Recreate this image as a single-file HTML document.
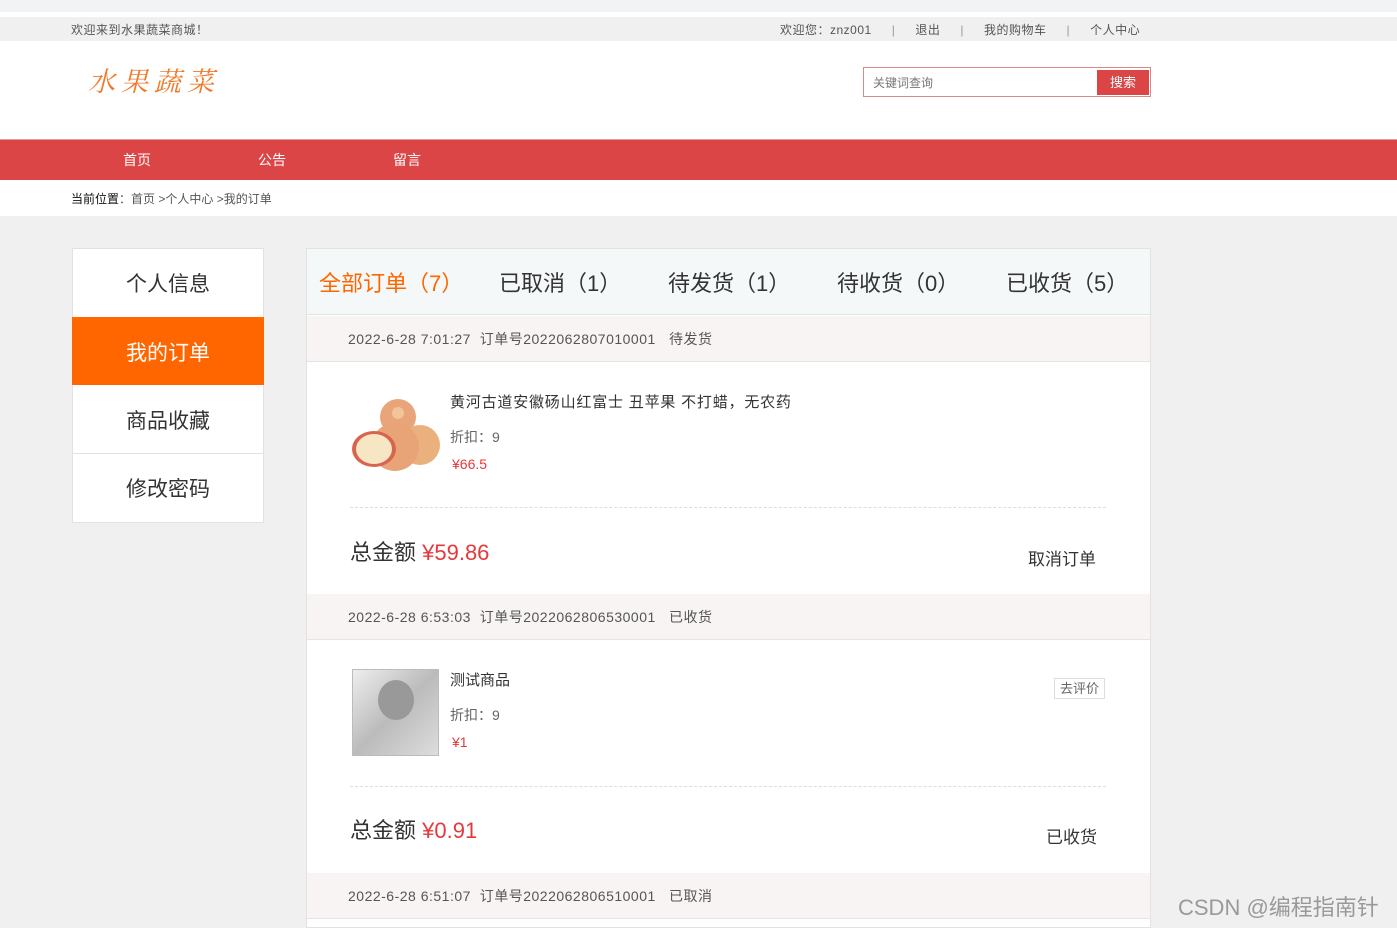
<!DOCTYPE html>
<html><head><meta charset="utf-8"><style>
*{margin:0;padding:0;box-sizing:border-box}
body{width:1397px;height:922px;overflow:hidden;background:#f0f0f0;font-family:"Liberation Sans","Noto Sans CJK SC",sans-serif;color:#333;position:relative}
.a{position:absolute}
.t{white-space:nowrap}
</style></head><body>
<div class="a" style="left:0;top:0;width:1397px;height:12px;background:#f1f3f4"></div>
<div class="a" style="left:0;top:12px;width:1397px;height:5px;background:#fff"></div>
<div class="a" style="left:0;top:17px;width:1397px;height:24px;background:#f0f0f0"></div>
<div class="a t" style="left:71px;top:21px;font-size:12px;color:#555;letter-spacing:0.5px">欢迎来到水果蔬菜商城！</div>
<div class="a t" style="left:780px;top:21px;font-size:12px;color:#555;letter-spacing:0.5px">欢迎您：znz001<span style="margin:0 20px;color:#999">|</span>退出<span style="margin:0 20px;color:#999">|</span>我的购物车<span style="margin:0 20px;color:#999">|</span>个人中心</div>
<div class="a" style="left:0;top:41px;width:1397px;height:99px;background:#fff"></div>
<div class="a t" style="left:88px;top:60px;font-size:27px;color:#f07a2a;letter-spacing:6px;font-family:'Noto Serif CJK SC',serif;font-style:italic">水果蔬菜</div>
<div class="a" style="left:863px;top:67px;width:288px;height:30px;border:1px solid #d9898a;background:#fff"></div>
<div class="a t" style="left:873px;top:74px;font-size:12px;color:#777">关键词查询</div>
<div class="a" style="left:1097px;top:70px;width:52px;height:25px;background:#db4545;color:#fff;font-size:13px;text-align:center;line-height:25px">搜索</div>
<div class="a" style="left:0;top:139px;width:1397px;height:41px;background:#db4545;border-top:1px solid #e59a9a"></div>
<div class="a t" style="left:123px;top:150px;font-size:14px;color:#fff">首页</div>
<div class="a t" style="left:258px;top:150px;font-size:14px;color:#fff">公告</div>
<div class="a t" style="left:393px;top:150px;font-size:14px;color:#fff">留言</div>
<div class="a" style="left:0;top:180px;width:1397px;height:36px;background:#fff"></div>
<div class="a t" style="left:71px;top:190px;font-size:12px;color:#555"><span style="color:#111">当前位置</span>：首页 &gt;个人中心 &gt;我的订单</div>

<div class="a" style="left:72px;top:248px;width:192px;height:275px;background:#fff;border:1px solid #e2e2e2"></div>
<div class="a t" style="left:72px;top:268px;width:192px;text-align:center;font-size:21px;color:#333">个人信息</div>
<div class="a" style="left:72px;top:317px;width:192px;height:68px;background:#ff6600"></div>
<div class="a t" style="left:72px;top:337px;width:192px;text-align:center;font-size:21px;color:#fff">我的订单</div>
<div class="a" style="left:72px;top:453px;width:192px;height:1px;background:#e2e2e2"></div>
<div class="a t" style="left:72px;top:405px;width:192px;text-align:center;font-size:21px;color:#333">商品收藏</div>
<div class="a t" style="left:72px;top:473px;width:192px;text-align:center;font-size:21px;color:#333">修改密码</div>

<div class="a" style="left:306px;top:248px;width:845px;height:680px;background:#fff;border:1px solid #e2e2e2"></div>
<div class="a" style="left:307px;top:249px;width:843px;height:66px;background:#f4f8f9;border-bottom:1px solid #e2e2e2"></div>
<div class="a t" style="left:319px;top:266px;font-size:22px;color:#ff6600">全部订单（7）</div>
<div class="a t" style="left:499px;top:266px;font-size:22px;color:#333">已取消（1）</div>
<div class="a t" style="left:668px;top:266px;font-size:22px;color:#333">待发货（1）</div>
<div class="a t" style="left:837px;top:266px;font-size:22px;color:#333">待收货（0）</div>
<div class="a t" style="left:1006px;top:266px;font-size:22px;color:#333">已收货（5）</div>

<div class="a" style="left:307px;top:316px;width:843px;height:46px;background:#f7f4f3;border-bottom:1px solid #e5e5e5"></div>
<div class="a t" style="left:348px;top:329px;font-size:14px;color:#555;letter-spacing:0.5px">2022-6-28 7:01:27&nbsp; 订单号2022062807010001&nbsp;&nbsp; 待发货</div>
<svg class="a" style="left:350px;top:395px" width="90" height="80" viewBox="0 0 90 80">
<circle cx="48" cy="22" r="18" fill="#e9a57a"/><circle cx="70" cy="50" r="20" fill="#eab07d"/><circle cx="45" cy="52" r="24" fill="#e8a476"/>
<ellipse cx="24" cy="54" rx="22" ry="18" fill="#d9644e"/><ellipse cx="24" cy="54" rx="18" ry="15" fill="#f7e6c4"/><circle cx="48" cy="18" r="6" fill="#f3c49a"/></svg>
<div class="a t" style="left:450px;top:391px;font-size:15px;color:#333;letter-spacing:0.8px">黄河古道安徽砀山红富士 丑苹果 不打蜡，无农药</div>
<div class="a t" style="left:450px;top:427px;font-size:14px;color:#666">折扣：9</div>
<div class="a t" style="left:452px;top:456px;font-size:14px;color:#e4393c">¥66.5</div>
<div class="a" style="left:350px;top:507px;width:756px;border-top:1px dashed #ddd"></div>
<div class="a t" style="left:350px;top:535px;font-size:22px;color:#333">总金额 <span style="color:#e4393c">¥59.86</span></div>
<div class="a t" style="left:1028px;top:545px;font-size:17px;color:#333">取消订单</div>

<div class="a" style="left:307px;top:594px;width:843px;height:46px;background:#f7f4f3;border-bottom:1px solid #e5e5e5"></div>
<div class="a t" style="left:348px;top:607px;font-size:14px;color:#555;letter-spacing:0.5px">2022-6-28 6:53:03&nbsp; 订单号2022062806530001&nbsp;&nbsp; 已收货</div>
<div class="a" style="left:352px;top:669px;width:87px;height:87px;border:1px solid #bbb;background:linear-gradient(135deg,#eee,#bbb 50%,#ddd)"></div>
<div class="a" style="left:378px;top:680px;width:36px;height:40px;border-radius:50%;background:#999"></div>
<div class="a t" style="left:450px;top:669px;font-size:15px;color:#333">测试商品</div>
<div class="a t" style="left:450px;top:705px;font-size:14px;color:#666">折扣：9</div>
<div class="a t" style="left:452px;top:734px;font-size:14px;color:#e4393c">¥1</div>
<div class="a t" style="left:1054px;top:678px;width:51px;height:21px;border:1px solid #ddd;font-size:13px;color:#666;text-align:center;line-height:19px">去评价</div>
<div class="a" style="left:350px;top:786px;width:756px;border-top:1px dashed #ddd"></div>
<div class="a t" style="left:350px;top:813px;font-size:22px;color:#333">总金额 <span style="color:#e4393c">¥0.91</span></div>
<div class="a t" style="left:1046px;top:823px;font-size:17px;color:#333">已收货</div>

<div class="a" style="left:307px;top:873px;width:843px;height:46px;background:#f7f4f3;border-bottom:1px solid #e5e5e5"></div>
<div class="a t" style="left:348px;top:886px;font-size:14px;color:#555;letter-spacing:0.5px">2022-6-28 6:51:07&nbsp; 订单号2022062806510001&nbsp;&nbsp; 已取消</div>
<div class="a t" style="left:1178px;top:890px;font-size:22px;color:#999">CSDN @编程指南针</div>
</body></html>
